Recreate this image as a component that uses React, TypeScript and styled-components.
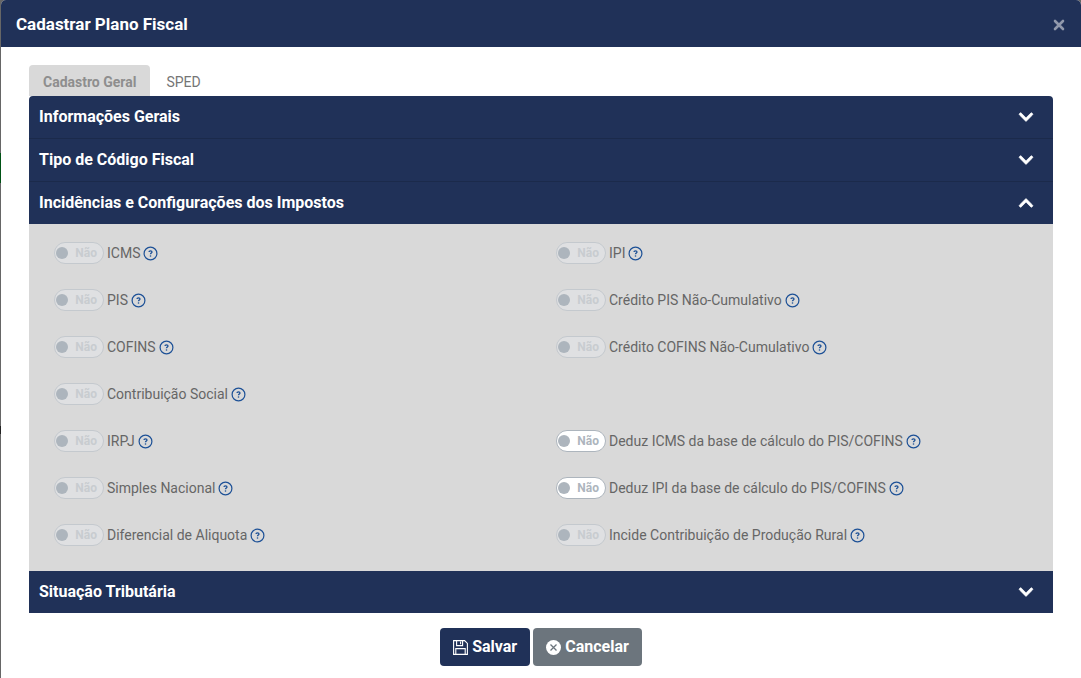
import React, { useState } from "react";
import styled, { createGlobalStyle } from "styled-components";
import { FaChevronDown, FaChevronUp } from "react-icons/fa";

const navy = "#203158";

const GlobalStyle = createGlobalStyle`
  *, *::before, *::after { box-sizing: border-box; }
  body {
    margin: 0;
    background: #666;
    font-family: Roboto, "Liberation Sans", sans-serif;
    font-size: 14px;
    line-height: 21px;
    color: #666;
  }
  button, input { font: inherit; }
`;

const Backdrop = styled.div`
  min-height: 100vh;
  display: flex;
  padding-left: 1px;
  background: linear-gradient(#666 153px, #005215 153px 183px, #666 183px 426px, #222 426px 434px, #666 434px);
`;

const Modal = styled.div`
  flex: 1;
  background: #fff;
  border-radius: 5px 5px 0 0;
  overflow: hidden;
`;

const ModalHeader = styled.header`
  display: flex;
  align-items: center;
  justify-content: space-between;
  height: 47px;
  padding: 0 16px 0 15px;
  background: ${navy};
`;

const Title = styled.h1`
  margin: 0;
  font-size: 17px;
  line-height: 24px;
  font-weight: 700;
  color: #fff;
`;

const CloseButton = styled.button`
  display: flex;
  padding: 3px 0 0;
  border: 0;
  background: none;
  color: #9098ab;
  cursor: pointer;
`;

const ModalBody = styled.main`
  padding: 18px 28px 12px;
`;

const Tabs = styled.div`
  display: flex;
`;

const Tab = styled.button<{ $active: boolean }>`
  height: 31px;
  padding: 4px 14px 0;
  border: 0;
  border-radius: 4px 4px 0 0;
  background: ${(p) => (p.$active ? "#d9d9d9" : "transparent")};
  color: ${(p) => (p.$active ? "#8e8e8e" : "#757575")};
  font-weight: ${(p) => (p.$active ? 700 : 400)};
  cursor: pointer;
  & + & { padding-left: 16px; }
`;

const Accordion = styled.div`
  border-radius: 4px 4px 0 0;
  overflow: hidden;
`;

const Section = styled.section`
  & + & { border-top: 1px solid #1b2a4b; }
  &:last-child { border-top: 0; }
`;

const SectionHeading = styled.h2`
  margin: 0;
  font-size: 16px;
  line-height: 24px;
  font-weight: 700;
`;

const SectionToggle = styled.button`
  display: flex;
  align-items: center;
  justify-content: space-between;
  width: 100%;
  height: 42px;
  padding: 0 19px 0 10px;
  border: 0;
  background: ${navy};
  color: #fff;
  text-align: left;
  cursor: pointer;
  svg {
    stroke: currentColor;
    stroke-width: 24px;
  }
`;

const Panel = styled.div`
  display: grid;
  grid-template-columns: 1fr 1fr;
  grid-auto-rows: 47px;
  padding: 6px 10px 12px;
  background: #d9d9d9;
`;

const Field = styled.div`
  display: flex;
  align-items: center;
  gap: 3px;
  padding: 0 15px;
`;

const Switch = styled.label<{ $disabled: boolean }>`
  display: flex;
  align-items: center;
  justify-content: space-between;
  width: 50px;
  height: 22px;
  margin-bottom: 1px;
  padding: 0 6px 0 1px;
  border: 1px solid ${(p) => (p.$disabled ? "#c4c9ce" : "#adb5bd")};
  border-radius: 11px;
  background: ${(p) => (p.$disabled ? "#dfe0e2" : "#fff")};
  color: ${(p) => (p.$disabled ? "#c8ccd0" : "#adb5bd")};
  font-size: 12px;
  font-weight: 700;
`;

const Knob = styled.input`
  appearance: none;
  width: 12px;
  height: 12px;
  margin: 0;
  border-radius: 50%;
  background: #adb5bd;
`;

const FieldLabel = styled.label`
  color: #666;
`;

const Help = styled.button`
  display: flex;
  margin-bottom: 1px;
  padding: 0;
  border: 0;
  background: none;
  color: #1c5096;
  cursor: help;
`;

const Actions = styled.footer`
  display: flex;
  justify-content: center;
  gap: 3px;
  padding-top: 15px;
`;

const ActionButton = styled.button<{ $color: string }>`
  display: flex;
  align-items: center;
  gap: 4px;
  height: 38px;
  padding: 0 13px 2px;
  border: 0;
  border-radius: 4px;
  background: ${(p) => p.$color};
  color: #fff;
  font-size: 16px;
  font-weight: 700;
  cursor: pointer;
  svg { margin-top: 3px; }
`;

const CloseIcon = () => (
  <svg width="12" height="12" viewBox="0 0 12 12" fill="none" stroke="currentColor" strokeWidth="2.6" strokeLinecap="round" aria-hidden="true">
    <path d="M2 2 10 10M10 2 2 10" />
  </svg>
);

const HelpIcon = () => (
  <svg width="15" height="15" viewBox="0 0 15 15" fill="none" stroke="currentColor" aria-hidden="true">
    <circle cx="7.5" cy="7.5" r="6.4" strokeWidth="1.2" />
    <path d="M6 6.1C6 5.2 6.6 4.8 7.5 4.8S9 5.2 9 6C9 7 7.5 7 7.5 8.3" strokeWidth="1.3" />
    <circle cx="7.5" cy="10" r=".8" fill="currentColor" stroke="none" />
  </svg>
);

const SaveIcon = () => (
  <svg width="15" height="15" viewBox="0 0 15 15" fill="none" stroke="currentColor" strokeWidth="1.1" aria-hidden="true">
    <path d="M.6 .6H11.6L14.4 3.4V14.4H.6Z" />
    <path d="M3.6 .6V5.6H9.6V.6M7.6 1.6V4.2" />
    <path d="M2.8 14.4V8.6H12.2V14.4" />
  </svg>
);

const CancelIcon = () => (
  <svg width="15" height="15" viewBox="0 0 15 15" aria-hidden="true">
    <circle cx="7.5" cy="7.5" r="7.5" fill="currentColor" />
    <path d="M4.5 4.5 10.5 10.5M10.5 4.5 4.5 10.5" stroke="#6c757d" strokeWidth="1.3" />
  </svg>
);

type Tax = { id: string; label: string; enabled?: boolean } | null;

const taxes: Tax[] = [
  { id: "icms", label: "ICMS" },
  { id: "ipi", label: "IPI" },
  { id: "pis", label: "PIS" },
  { id: "credito-pis", label: "Crédito PIS Não-Cumulativo" },
  { id: "cofins", label: "COFINS" },
  { id: "credito-cofins", label: "Crédito COFINS Não-Cumulativo" },
  { id: "contribuicao-social", label: "Contribuição Social" },
  null,
  { id: "irpj", label: "IRPJ" },
  { id: "deduz-icms", label: "Deduz ICMS da base de cálculo do PIS/COFINS", enabled: true },
  { id: "simples", label: "Simples Nacional" },
  { id: "deduz-ipi", label: "Deduz IPI da base de cálculo do PIS/COFINS", enabled: true },
  { id: "diferencial", label: "Diferencial de Aliquota" },
  { id: "producao-rural", label: "Incide Contribuição de Produção Rural" },
];

const sections = [
  "Informações Gerais",
  "Tipo de Código Fiscal",
  "Incidências e Configurações dos Impostos",
  "Situação Tributária",
];

function TaxField({ tax }: { tax: NonNullable<Tax> }) {
  const [on, setOn] = useState(false);
  return (
    <Field>
      <Switch $disabled={!tax.enabled}>
        <Knob
          id={tax.id}
          type="checkbox"
          role="switch"
          checked={on}
          disabled={!tax.enabled}
          onChange={() => setOn(!on)}
        />
        {on ? "Sim" : "Não"}
      </Switch>
      <FieldLabel htmlFor={tax.id}>{tax.label}</FieldLabel>
      <Help type="button" aria-label={`Ajuda: ${tax.label}`}>
        <HelpIcon />
      </Help>
    </Field>
  );
}

export default function App() {
  const [tab, setTab] = useState("Cadastro Geral");
  const [open, setOpen] = useState(2);
  return (
    <>
      <GlobalStyle />
      <Backdrop>
        <Modal role="dialog" aria-labelledby="titulo">
          <ModalHeader>
            <Title id="titulo">Cadastrar Plano Fiscal</Title>
            <CloseButton type="button" aria-label="Fechar">
              <CloseIcon />
            </CloseButton>
          </ModalHeader>
          <ModalBody>
            <Tabs role="tablist">
              {["Cadastro Geral", "SPED"].map((name) => (
                <Tab key={name} type="button" role="tab" aria-selected={tab === name} $active={tab === name} onClick={() => setTab(name)}>
                  {name}
                </Tab>
              ))}
            </Tabs>
            <Accordion>
              {sections.map((name, i) => (
                <Section key={name}>
                  <SectionHeading>
                    <SectionToggle type="button" aria-expanded={open === i} onClick={() => setOpen(open === i ? -1 : i)}>
                      {name}
                      {open === i ? <FaChevronUp size={16} /> : <FaChevronDown size={16} />}
                    </SectionToggle>
                  </SectionHeading>
                  {open === i && i === 2 && (
                    <Panel>
                      {taxes.map((tax, n) => (tax ? <TaxField key={tax.id} tax={tax} /> : <span key={n} />))}
                    </Panel>
                  )}
                </Section>
              ))}
            </Accordion>
            <Actions>
              <ActionButton type="button" $color={navy}>
                <SaveIcon />
                Salvar
              </ActionButton>
              <ActionButton type="button" $color="#6c757d">
                <CancelIcon />
                Cancelar
              </ActionButton>
            </Actions>
          </ModalBody>
        </Modal>
      </Backdrop>
    </>
  );
}
